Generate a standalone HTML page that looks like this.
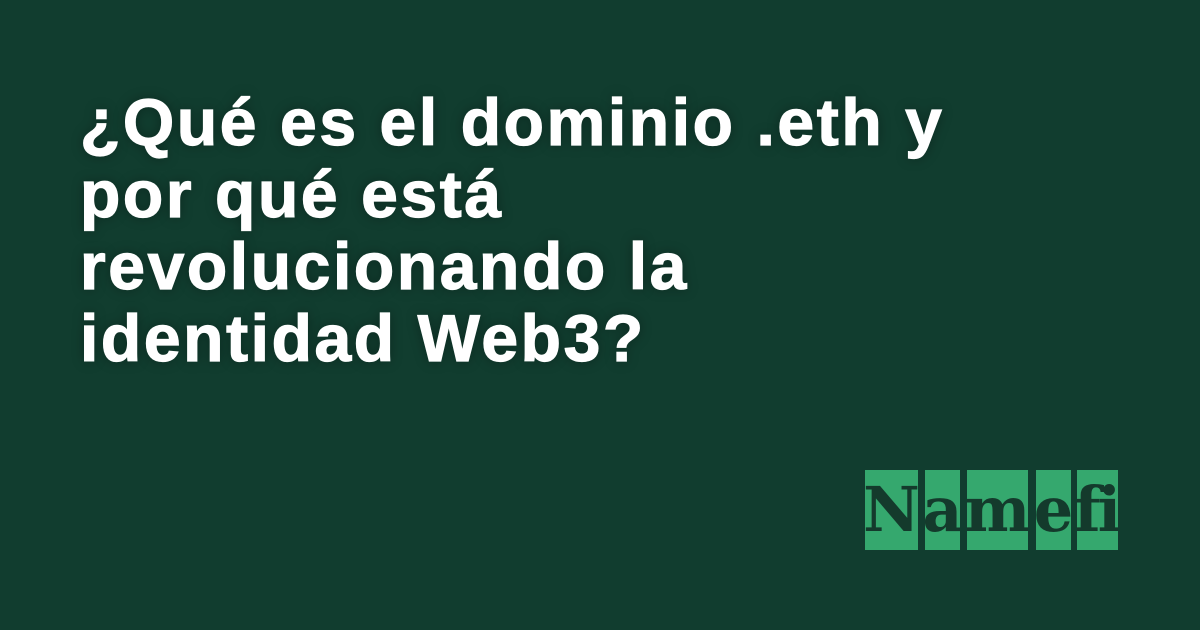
<!DOCTYPE html>
<html><head><meta charset="utf-8"><style>
html,body{margin:0;padding:0}
body{width:1200px;height:630px;background:#113d2f;position:relative;overflow:hidden;font-family:"Liberation Sans",sans-serif}
h1{position:absolute;left:80px;top:86px;margin:0;color:#fff;font-weight:700;font-size:66px;line-height:72px;letter-spacing:2.6px;-webkit-text-stroke:1.2px #fff;text-shadow:0 0 12px rgba(0,0,0,0.35)}
.b{position:absolute;top:470px;height:80px;background:#35a86e;color:#143a2c;font-family:"DejaVu Serif",serif;font-weight:700;font-size:62px;line-height:80px;text-align:center;overflow:hidden;letter-spacing:-3px;text-indent:-3px}
</style></head><body>
<h1>¿Qué es el dominio .eth y<br>por qué está<br>revolucionando la<br>identidad Web3?</h1>
<div class="b" style="left:865px;width:53px">N</div>
<div class="b" style="left:925px;width:35px">a</div>
<div class="b" style="left:967px;width:61px">m</div>
<div class="b" style="left:1036px;width:35px">e</div>
<div class="b" style="left:1077px;width:41px">fi</div>
</body></html>
